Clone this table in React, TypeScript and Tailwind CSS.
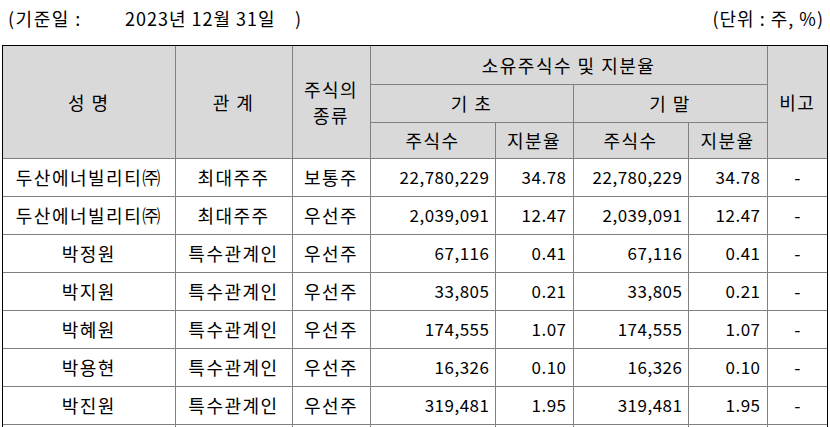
import * as React from 'react';

type Row = [string, string, string, string, string, string, string, string];

const rows: Row[] = [
  ['두산에너빌리티㈜', '최대주주', '보통주', '22,780,229', '34.78', '22,780,229', '34.78', '-'],
  ['두산에너빌리티㈜', '최대주주', '우선주', '2,039,091', '12.47', '2,039,091', '12.47', '-'],
  ['박정원', '특수관계인', '우선주', '67,116', '0.41', '67,116', '0.41', '-'],
  ['박지원', '특수관계인', '우선주', '33,805', '0.21', '33,805', '0.21', '-'],
  ['박혜원', '특수관계인', '우선주', '174,555', '1.07', '174,555', '1.07', '-'],
  ['박용현', '특수관계인', '우선주', '16,326', '0.10', '16,326', '0.10', '-'],
  ['박진원', '특수관계인', '우선주', '319,481', '1.95', '319,481', '1.95', '-'],
  ['', '', '', '', '', '', '', ''],
];

const th = 'border border-[#808080] bg-[#d9d9d9] font-normal text-center align-middle p-0';
const td = 'border border-[#808080] p-0 align-middle';
const num = 'text-right text-[17px] tracking-[0.5px]';

export default function App() {
  return (
    <div className="min-h-screen bg-white text-[18px] leading-[20px] tracking-[1.5px] text-black [font-family:'Noto_Sans_CJK_KR',sans-serif]">
      <div className="flex h-[45px] items-start justify-between pt-[8px] pl-[8px] pr-[6px]">
        <div className="flex">
          <span className="w-[117px]">(기준일 :</span>
          <span className="w-[170px] tracking-[1px]">2023년 12월 31일</span>
          <span>)</span>
        </div>
        <div className="tracking-[1px]">(단위 : 주, %)</div>
      </div>

      <div className="ml-[2px] w-[826px] border border-b-0 border-black">
        <table className="w-full table-fixed border-collapse border-hidden">
          <colgroup>
            <col className="w-[172px]" />
            <col className="w-[117px]" />
            <col className="w-[78px]" />
            <col className="w-[125px]" />
            <col className="w-[78px]" />
            <col className="w-[115px]" />
            <col className="w-[79px]" />
            <col className="w-[60px]" />
          </colgroup>
          <thead>
            <tr className="h-[38px]">
              <th rowSpan={3} className={th}>성 명</th>
              <th rowSpan={3} className={th}>관 계</th>
              <th rowSpan={3} className={`${th} leading-[26px]`}>
                주식의
                <br />
                종류
              </th>
              <th colSpan={4} className={th}>소유주식수 및 지분율</th>
              <th rowSpan={3} className={th}>비고</th>
            </tr>
            <tr className="h-[38px]">
              <th colSpan={2} className={th}>기 초</th>
              <th colSpan={2} className={th}>기 말</th>
            </tr>
            <tr className="h-[36px]">
              <th className={th}>주식수</th>
              <th className={th}>지분율</th>
              <th className={th}>주식수</th>
              <th className={th}>지분율</th>
            </tr>
          </thead>
          <tbody>
            {rows.map((r, i) => (
              <tr key={i} className="h-[38px]">
                <td className={`${td} text-center`}>{r[0]}</td>
                <td className={`${td} text-center`}>{r[1]}</td>
                <td className={`${td} text-center`}>{r[2]}</td>
                <td className={`${td} pr-[5px] ${num}`}>{r[3]}</td>
                <td className={`${td} pr-[6px] ${num}`}>{r[4]}</td>
                <td className={`${td} pr-[5px] ${num}`}>{r[5]}</td>
                <td className={`${td} pr-[6px] ${num}`}>{r[6]}</td>
                <td className={`${td} text-center tracking-normal`}>{r[7]}</td>
              </tr>
            ))}
          </tbody>
        </table>
      </div>
    </div>
  );
}
